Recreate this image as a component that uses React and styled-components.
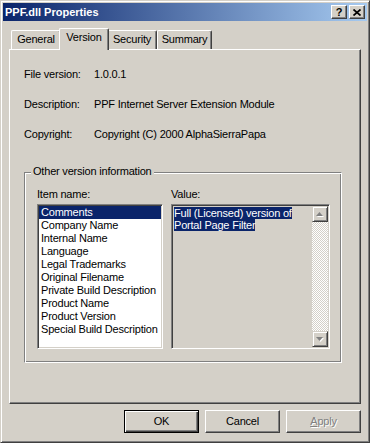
import styled, { createGlobalStyle } from "styled-components";

const FACE = "#d4d0c8";

const Global = createGlobalStyle`
  html, body {
    margin: 0;
    padding: 0;
    background: ${FACE};
  }
  body {
    font-family: "Liberation Sans", Arial, sans-serif;
    font-size: 11px;
    letter-spacing: -0.2px;
    color: #000;
  }
`;

const Window = styled.div`
  box-sizing: border-box;
  width: 370px;
  height: 443px;
  display: flex;
  flex-direction: column;
  padding: 2px;
  background: ${FACE};
  border: 1px solid;
  border-color: ${FACE} #404040 #404040 ${FACE};
  box-shadow: inset 1px 1px #fff, inset -1px -1px #808080;
`;

const TitleBar = styled.div`
  height: 18px;
  display: flex;
  align-items: center;
  padding: 0 2px;
  background: linear-gradient(to right, #0a246a, #a6caf0);
`;

const Title = styled.div`
  flex: 1;
  color: #fff;
  font-weight: bold;
  letter-spacing: 0;
  line-height: 13px;
`;

const CaptionButtons = styled.div`
  display: flex;
  gap: 2px;
`;

const CaptionButton = styled.div`
  box-sizing: border-box;
  width: 16px;
  height: 14px;
  display: flex;
  align-items: center;
  justify-content: center;
  background: ${FACE};
  border: 1px solid;
  border-color: #fff #404040 #404040 #fff;
  box-shadow: inset -1px -1px #808080;
  font-weight: bold;
  font-size: 11px;
  line-height: 12px;
`;

const Body = styled.div`
  display: flex;
  flex-direction: column;
  padding: 7px 6px 0;
`;

const TabRow = styled.div`
  height: 21px;
  display: flex;
  align-items: flex-end;
  padding-left: 2px;
`;

const Tab = styled.div`
  box-sizing: border-box;
  position: relative;
  z-index: ${(p) => (p.$active ? 1 : 0)};
  width: ${(p) => p.$w}px;
  height: ${(p) => (p.$active ? 22 : 19)}px;
  margin: ${(p) => (p.$active ? "0 -2px -1px" : "0")};
  padding-bottom: ${(p) => (p.$active ? 4 : 1)}px;
  display: flex;
  align-items: center;
  justify-content: center;
  background: ${FACE};
  border: 1px solid #fff;
  border-bottom: none;
  border-right-color: #404040;
  border-radius: 2px 2px 0 0;
  box-shadow: inset -1px 0 #808080;
  line-height: 13px;
`;

const Panel = styled.div`
  box-sizing: border-box;
  height: 355px;
  display: flex;
  flex-direction: column;
  padding: 18px 0 0 14px;
  border: 1px solid;
  border-color: #fff #404040 #404040 #fff;
  box-shadow: inset -1px -1px #808080;
`;

const Info = styled.div`
  display: grid;
  grid-template-columns: 70px auto;
  row-gap: 17px;
  line-height: 13px;
`;

const Group = styled.div`
  box-sizing: border-box;
  width: 318px;
  height: 191px;
  margin-top: 31px;
  display: flex;
  flex-direction: column;
  padding: 0 11px 0 12px;
  border: 1px solid;
  border-color: #808080 #fff #fff #808080;
  box-shadow: inset 1px 1px #fff, inset -1px -1px #808080;
`;

const GroupLabel = styled.div`
  align-self: flex-start;
  height: 13px;
  line-height: 13px;
  margin: -8px 0 0 -6px;
  padding: 0 2px;
  background: ${FACE};
`;

const Columns = styled.div`
  display: flex;
  gap: 8px;
  margin-top: 10px;
`;

const Column = styled.div`
  display: flex;
  flex-direction: column;
`;

const FieldLabel = styled.div`
  line-height: 13px;
  margin-bottom: 3px;
`;

const Sunken = styled.div`
  box-sizing: border-box;
  width: ${(p) => p.$w}px;
  height: 145px;
  padding: 1px;
  border: 1px solid;
  border-color: #808080 #fff #fff #808080;
  box-shadow: inset 1px 1px #404040, inset -1px -1px ${FACE};
  background: ${(p) => (p.$readonly ? FACE : "#fff")};
  display: flex;
  flex-direction: ${(p) => (p.$readonly ? "row" : "column")};
`;

const Item = styled.div`
  height: 13px;
  line-height: 13px;
  padding-left: 2px;
  white-space: nowrap;
  background: ${(p) => (p.$selected ? "#0a246a" : "transparent")};
  color: ${(p) => (p.$selected ? "#fff" : "#000")};
`;

const ValueText = styled.div`
  flex: 1;
  padding: 1px 0 0 1px;
`;

const SelLine = styled.div`
  height: 12px;
`;

const Sel = styled.span`
  display: inline-block;
  height: 12px;
  line-height: 12px;
  white-space: nowrap;
  background: #0a246a;
  color: #fff;
`;

const ScrollBar = styled.div`
  width: 16px;
  display: flex;
  flex-direction: column;
`;

const ArrowButton = styled.div`
  box-sizing: border-box;
  width: 16px;
  height: 16px;
  display: flex;
  align-items: center;
  justify-content: center;
  background: ${FACE};
  border: 1px solid;
  border-color: ${FACE} #404040 #404040 ${FACE};
  box-shadow: inset 1px 1px #fff, inset -1px -1px #808080;
`;

const Track = styled.div`
  flex: 1;
  background: repeating-conic-gradient(#fff 0 25%, ${FACE} 0 50%) 0 0 / 2px 2px;
`;

const Footer = styled.div`
  display: flex;
  justify-content: flex-end;
  gap: 6px;
  margin-top: 6px;
`;

const Button = styled.div`
  box-sizing: border-box;
  width: 75px;
  height: 23px;
  display: flex;
  align-items: center;
  justify-content: center;
  background: ${FACE};
  border: 1px solid;
  border-color: ${(p) => (p.$default ? "#000" : "#fff #404040 #404040 #fff")};
  box-shadow: ${(p) =>
    p.$default
      ? "inset 1px 1px #fff, inset -1px -1px #404040, inset -2px -2px #808080"
      : "inset -1px -1px #808080"};
  color: ${(p) => (p.$disabled ? "#808080" : "#000")};
  text-shadow: ${(p) => (p.$disabled ? "1px 1px #fff" : "none")};
  line-height: 13px;
`;

function Arrow({ down }) {
  const pts = down ? "0,0 7,0 3.5,4" : "3.5,0 7,4 0,4";
  return (
    <svg width="8" height="5" viewBox="0 0 8 5">
      <polygon points={pts} fill="#fff" transform="translate(1,1)" />
      <polygon points={pts} fill="#808080" />
    </svg>
  );
}

const items = [
  "Comments",
  "Company Name",
  "Internal Name",
  "Language",
  "Legal Trademarks",
  "Original Filename",
  "Private Build Description",
  "Product Name",
  "Product Version",
  "Special Build Description",
];

const tabs = [
  { name: "General", w: 50 },
  { name: "Version", w: 50, active: true },
  { name: "Security", w: 50 },
  { name: "Summary", w: 55 },
];

export default function App() {
  return (
    <>
      <Global />
      <Window>
        <TitleBar>
          <Title>PPF.dll Properties</Title>
          <CaptionButtons>
            <CaptionButton>?</CaptionButton>
            <CaptionButton>
              <svg width="8" height="7" viewBox="0 0 8 7">
                <path d="M0.5 0.5 L7.5 6.5 M7.5 0.5 L0.5 6.5" stroke="#000" strokeWidth="1.7" />
              </svg>
            </CaptionButton>
          </CaptionButtons>
        </TitleBar>
        <Body>
          <TabRow>
            {tabs.map((t) => (
              <Tab key={t.name} $w={t.w} $active={t.active}>
                {t.name}
              </Tab>
            ))}
          </TabRow>
          <Panel>
            <Info>
              <span>File version:</span>
              <span>1.0.0.1</span>
              <span>Description:</span>
              <span>PPF Internet Server Extension Module</span>
              <span>Copyright:</span>
              <span>Copyright (C) 2000 AlphaSierraPapa</span>
            </Info>
            <Group>
              <GroupLabel>Other version information</GroupLabel>
              <Columns>
                <Column>
                  <FieldLabel>Item name:</FieldLabel>
                  <Sunken $w={126}>
                    {items.map((it, i) => (
                      <Item key={it} $selected={i === 0}>
                        {it}
                      </Item>
                    ))}
                  </Sunken>
                </Column>
                <Column>
                  <FieldLabel>Value:</FieldLabel>
                  <Sunken $w={159} $readonly>
                    <ValueText>
                      <SelLine>
                        <Sel>Full (Licensed) version of</Sel>
                      </SelLine>
                      <SelLine>
                        <Sel>Portal Page Filter</Sel>
                      </SelLine>
                    </ValueText>
                    <ScrollBar>
                      <ArrowButton>
                        <Arrow />
                      </ArrowButton>
                      <Track />
                      <ArrowButton>
                        <Arrow down />
                      </ArrowButton>
                    </ScrollBar>
                  </Sunken>
                </Column>
              </Columns>
            </Group>
          </Panel>
          <Footer>
            <Button $default>OK</Button>
            <Button>Cancel</Button>
            <Button $disabled>
              <span>
                <u>A</u>pply
              </span>
            </Button>
          </Footer>
        </Body>
      </Window>
    </>
  );
}
